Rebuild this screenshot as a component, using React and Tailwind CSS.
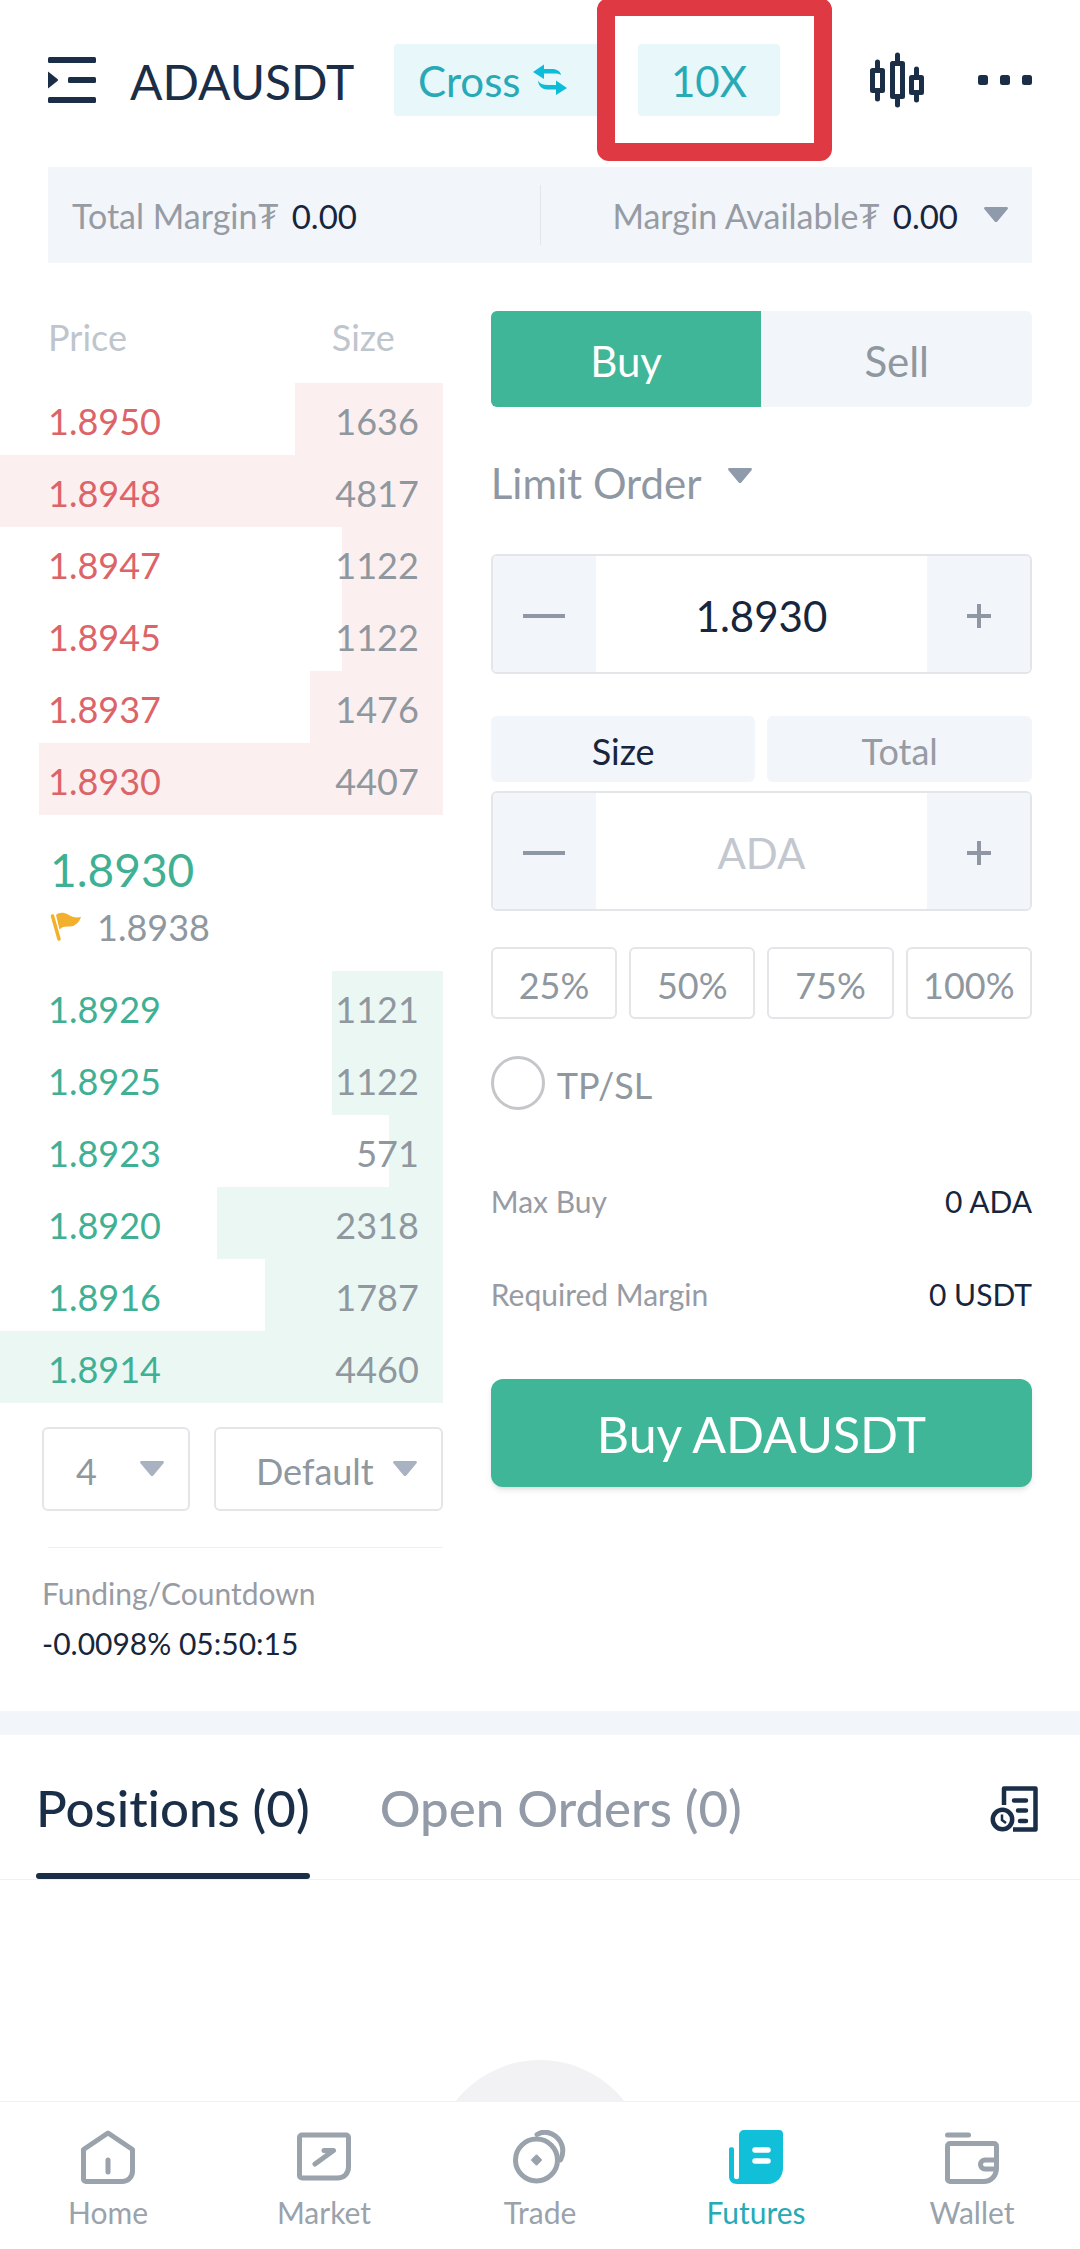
import { useState } from 'react';

const asks = [
  { price: '1.8950', size: 1636, depth: 33.3 },
  { price: '1.8948', size: 4817, depth: 100 },
  { price: '1.8947', size: 1122, depth: 22.8 },
  { price: '1.8945', size: 1122, depth: 22.8 },
  { price: '1.8937', size: 1476, depth: 30 },
  { price: '1.8930', size: 4407, depth: 91.2 },
];

const bids = [
  { price: '1.8929', size: 1121, depth: 25 },
  { price: '1.8925', size: 1122, depth: 25 },
  { price: '1.8923', size: 571, depth: 12.2 },
  { price: '1.8920', size: 2318, depth: 51 },
  { price: '1.8916', size: 1787, depth: 40.2 },
  { price: '1.8914', size: 4460, depth: 100 },
];

const Caret = ({ className = '' }) => (
  <svg viewBox="0 0 24 16" className={`w-6 h-4 pointer-events-none ${className}`} fill="currentColor" aria-hidden="true">
    <path d="M1.5 0h21c1.3 0 1.9 1.4 1 2.3L13.3 14.5c-.7.8-1.9.8-2.6 0L.5 2.3C-.4 1.4.2 0 1.5 0z" />
  </svg>
);

const MenuIcon = () => (
  <svg viewBox="0 0 48 48" className="w-12 h-12" fill="currentColor" aria-hidden="true">
    <rect x="0" y="1" width="48" height="6" rx="1.5" />
    <rect x="20" y="21" width="28" height="6" rx="1.5" />
    <rect x="0" y="41" width="48" height="6" rx="1.5" />
    <path d="M0 15.5 9.500 23q1.2 1 0 2L0 32.500z" />
  </svg>
);

const SwapIcon = () => (
  <svg viewBox="0 0 34 32" className="w-[34px] h-8 text-[#0cbcd8]" aria-hidden="true">
    <g fill="currentColor">
      <path d="M0 8 11 .5V5h8c5 0 8.5 2.5 9 6-2-1.2-4-1.5-7-1.5H11V15z" />
      <path d="M34 24 23 16.500v4.500h-8c-5 0-8.500-1.500-10-4.500.5 5.500 4 9 9 9h9V31z" />
    </g>
  </svg>
);

const CandlesIcon = () => (
  <svg viewBox="0 0 54 56" className="w-[54px] h-14" fill="none" stroke="currentColor" aria-hidden="true">
    <g strokeWidth="5" strokeLinejoin="round">
      <rect x="2.5" y="18.5" width="10" height="20" />
      <rect x="22.5" y="11.5" width="10" height="33" />
      <rect x="41.500" y="25.500" width="10" height="15" />
    </g>
    <path d="M7.5 10v7M7.5 40v7M27.5 3v8M27.5 46v7M46.5 17v8M46.5 42v6" strokeWidth="5" strokeLinecap="round" />
  </svg>
);

const DotsIcon = () => (
  <svg viewBox="0 0 54 10" className="w-[54px] h-[10px]" fill="currentColor" aria-hidden="true">
    <rect width="10" height="10" rx="2.5" />
    <rect x="22" width="10" height="10" rx="2.5" />
    <rect x="44" width="10" height="10" rx="2.5" />
  </svg>
);

const FlagIcon = () => (
  <svg viewBox="0 0 31 30" className="w-[31px] h-[30px] text-[#f2b02c]" aria-hidden="true">
    <path d="M2.5 4 9 27" stroke="currentColor" strokeWidth="3.5" strokeLinecap="round" />
    <path d="M6 3C9 0 14 0 18 2.500s8 3.500 13 2.500c-2 6-6 9-11 9.500-4 .3-7-.5-10.500 3z" fill="currentColor" />
  </svg>
);

const HistoryIcon = () => (
  <svg viewBox="0 0 48 48" className="w-12 h-12" fill="none" stroke="currentColor" aria-hidden="true">
    <path d="M14 20V3.5h31.5v41H23" strokeWidth="4.5" strokeLinejoin="round" />
    <path d="M24 15.5h12M28 25.500h8M30 36h6" strokeWidth="4.5" strokeLinecap="round" />
    <circle cx="12.5" cy="34.5" r="9.7" strokeWidth="4.5" />
    <path d="M12 29.500v5.500l4 3" strokeWidth="2.5" />
  </svg>
);

const HomeIcon = () => (
  <g>
    <path d="M2.5 19.5 27 3l24.5 16.5V41c0 6-4.5 10.5-10.5 10.5H5a2.5 2.5 0 0 1-2.5-2.5z" />
    <path d="M27 30v12" />
  </g>
);

const MarketIcon = () => (
  <g>
    <path d="M5 5h44a2.5 2.5 0 0 1 2.5 2.5V37c0 6.5-4.5 11-11 11H5a2.5 2.5 0 0 1-2.5-2.5v-38A2.5 2.5 0 0 1 5 5z" />
    <path d="M18 34 36.5 20.500H27" />
  </g>
);

const TradeIcon = () => (
  <g>
    <circle cx="23.5" cy="30" r="21" />
    <path d="M24 4.500c4-2.500 10-3 15-.5 10 5 13.500 16 8.500 26" />
    <path d="m23.500 25.500 4.500 4.500-4.500 4.500L19 30z" fill="currentColor" strokeWidth="2" />
  </g>
);

const FuturesIcon = () => (
  <g stroke="none" fill="currentColor">
    <path d="M15 0h35a4 4 0 0 1 4 4v34c0 9-6.500 16-15 16H8c-5 0-8-3-8-8V19c0-2.500 5-2.500 5 0v28c0 3 5 3 5 0V5a5 5 0 0 1 5-5z" />
    <path d="M26 20h13M26 31h13" stroke="#fff" strokeWidth="5.5" fill="none" />
  </g>
);

const WalletIcon = () => (
  <g>
    <path d="M2.5 5h21" />
    <path d="M5 13.500h44a2.500 2.500 0 0 1 2.500 2.500v22c0 8-5.500 13.500-13 13.500H5A2.500 2.500 0 0 1 2.500 49V16A2.500 2.500 0 0 1 5 13.500z" />
    <path d="M51 30H40a4.500 4.500 0 0 0 0 9h10" />
  </g>
);

const navItems = [
  { label: 'Home', Icon: HomeIcon },
  { label: 'Market', Icon: MarketIcon },
  { label: 'Trade', Icon: TradeIcon },
  { label: 'Futures', Icon: FuturesIcon, active: true },
  { label: 'Wallet', Icon: WalletIcon },
];

const BookRows = ({ rows, priceClass, barColor }) => (
  <tbody>
    {rows.map(row => (
      <tr
        key={row.price}
        className="h-[72px]"
        style={{ background: `linear-gradient(to left, ${barColor} ${row.depth}%, transparent ${row.depth}%)` }}
      >
        <td className={`pl-12 pt-[3px] ${priceClass}`}>{row.price}</td>
        <td className="pr-6 pt-[3px] text-right text-[#8f979f]">{row.size}</td>
      </tr>
    ))}
  </tbody>
);

const Stepper = ({ label, value, onChange, placeholder }) => (
  <div className="flex h-[120px] border-2 border-[#e3e5e8] rounded-md overflow-hidden text-[#8f97a5]">
    <button aria-label={`Decrease ${label}`} className="w-[103px] shrink-0 pt-1 bg-[#f2f5f9] flex items-center justify-center">
      <svg viewBox="0 0 42 4" className="w-[42px] h-1" fill="currentColor"><rect width="42" height="4" /></svg>
    </button>
    <input
      aria-label={label}
      value={value}
      placeholder={placeholder}
      onChange={e => onChange(e.target.value)}
      className="flex-1 min-w-0 pt-1 text-center text-[42px] text-[#17263c] placeholder:text-[#c3c7d0] outline-none"
    />
    <button aria-label={`Increase ${label}`} className="w-[103px] shrink-0 pt-1 bg-[#f2f5f9] flex items-center justify-center">
      <svg viewBox="0 0 24 24" className="w-6 h-6" stroke="currentColor" strokeWidth="4"><path d="M12 0v24M0 12h24" /></svg>
    </button>
  </div>
);

const Futures = () => {
  const [price, setPrice] = useState('1.8930');
  const [size, setSize] = useState('');
  const [tpsl, setTpsl] = useState(false);

  const renderHeader = () => (
    <header className="flex items-center h-40 px-12 mb-[7px] text-[#1a2f47]">
      <button aria-label="Open pairs"><MenuIcon /></button>
      <h1 className="ml-[34px] pt-1 text-[48px]">ADAUSDT</h1>
      <div className="flex items-center ml-auto">
        <button className="flex items-center gap-3 w-[206px] h-[72px] pl-6 rounded-sm bg-[#e8f7fa] text-[42px] text-[#27aab6]">
          <span className="pt-[3px]">Cross</span>
          <SwapIcon />
        </button>
        <div className="relative ml-[38px]">
          <button className="w-[142px] h-[72px] pt-[3px] rounded-sm bg-[#e8f7fa] text-[42px] text-[#27aab6]">10X</button>
          <div className="absolute -left-[41px] -right-[52px] -top-[46px] -bottom-[45px] border-[18px] border-[#df3a44] rounded-xl pointer-events-none" />
        </div>
        <button aria-label="Chart" className="ml-[90px]"><CandlesIcon /></button>
        <button aria-label="More" className="ml-[54px]"><DotsIcon /></button>
      </div>
    </header>
  );

  const renderMargin = () => (
    <section className="flex items-center mx-12 h-24 bg-[#f2f5f9] text-[34px] text-[#979ba4]">
      <div className="flex-1 pl-6 pt-[2px]">
        Total Margin₮ <span className="ml-1 text-[33px] text-[#17263c]">0.00</span>
      </div>
      <div className="w-px h-[60px] bg-[#e3e6eb]" />
      <div className="flex-1 flex items-center justify-end pr-6">
        <span className="pt-[2px]">
          Margin Available₮ <span className="ml-1 text-[33px] text-[#17263c]">0.00</span>
        </span>
        <button aria-label="Expand margin" className="ml-[26px] text-[#8f9bab]"><Caret /></button>
      </div>
    </section>
  );

  const renderOrderBook = () => (
    <section className="w-[41%] shrink-0 pt-[38px]">
      <table className="w-full text-[36px] leading-10">
        <thead>
          <tr className="h-[82px] align-top text-[#bfc5cd]">
            <th className="pl-12 pt-4 text-left font-normal">Price</th>
            <th className="pr-12 pt-4 text-right font-normal">Size</th>
          </tr>
        </thead>
        <BookRows rows={asks} priceClass="text-[#dc6468]" barColor="#fcefef" />
        <tbody>
          <tr className="h-[156px]">
            <td colSpan={2} className="pl-[50px] pt-2">
              <p className="text-[46px] leading-[60px] text-[#40b094]">1.8930</p>
              <p className="flex items-center gap-4 h-[54px] text-[#8f979f]">
                <FlagIcon />
                <span>1.8938</span>
              </p>
            </td>
          </tr>
        </tbody>
        <BookRows rows={bids} priceClass="text-[#40b094]" barColor="#ebf7f3" />
      </table>

      <div className="flex gap-6 mt-6 ml-[42px] text-[36px] text-[#8f979f]">
        <div className="relative flex-[148]">
          <select aria-label="Price decimals" className="appearance-none w-full h-[84px] pt-1 pl-8 border-2 border-[#e3e5e8] rounded-md">
            <option>4</option>
          </select>
          <Caret className="absolute right-[26px] top-[34px] text-[#a9b2c0]" />
        </div>
        <div className="relative flex-[229]">
          <select aria-label="Book view" className="appearance-none w-full h-[84px] pt-1 pl-10 border-2 border-[#e3e5e8] rounded-md">
            <option>Default</option>
          </select>
          <Caret className="absolute right-[26px] top-[34px] text-[#a9b2c0]" />
        </div>
      </div>

      <div className="mt-9 ml-12 h-px bg-[#eef0f3]" />
      <div className="mt-5 pb-[43px] pl-[42px] text-[30px] leading-[50px]">
        <p className="text-[#979ba4]">Funding/Countdown</p>
        <p className="text-[#17263c]">-0.0098% 05:50:15</p>
      </div>
    </section>
  );

  const renderOrderForm = () => (
    <section className="flex-1 min-w-0 px-12 pt-12">
      <div className="flex h-24 rounded-md overflow-hidden text-[42px]">
        <button className="flex-1 pt-1 bg-[#3fb698] text-white">Buy</button>
        <button className="flex-1 pt-1 bg-[#f2f5f9] text-[#8f979f]">Sell</button>
      </div>

      <div className="relative flex w-fit mt-[45px] text-[42px] text-[#8f97a3]">
        <select aria-label="Order type" className="appearance-none h-14 pr-[50px]">
          <option>Limit Order</option>
        </select>
        <Caret className="absolute right-0 top-4 text-[#8f9bab]" />
      </div>

      <div className="mt-[46px]">
        <Stepper label="Price" value={price} onChange={setPrice} />
      </div>

      <div className="flex gap-3 mt-[42px] mb-[9px] h-[66px] text-[36px]">
        <button className="flex-1 pt-1 rounded-md bg-[#f2f5f9] text-[#17263c]">Size</button>
        <button className="flex-1 pt-1 rounded-md bg-[#f2f5f9] text-[#979ba4]">Total</button>
      </div>
      <Stepper label="Size" value={size} onChange={setSize} placeholder="ADA" />

      <div className="grid grid-cols-4 gap-3 mt-9 text-[36px] text-[#8f979f]">
        {['25%', '50%', '75%', '100%'].map(pct => (
          <button key={pct} className="h-[72px] pt-1 border-2 border-[#e3e5e8] rounded-md">{pct}</button>
        ))}
      </div>

      <label className="flex items-center gap-3 h-14 mt-9 text-[36px] text-[#8f979f]">
        <input
          type="checkbox"
          checked={tpsl}
          onChange={e => setTpsl(e.target.checked)}
          className="appearance-none w-[54px] h-[54px] border-[3px] border-[#c4c6c9] rounded-full checked:bg-[#3fb698]"
        />
        <span className="pt-1">TP/SL</span>
      </label>

      <dl className="mt-[44px] text-[30px]">
        <div className="flex items-center justify-between h-[93px]">
          <dt className="text-[#979ba4]">Max Buy</dt>
          <dd className="text-[#17263c]">0 ADA</dd>
        </div>
        <div className="flex items-center justify-between h-[93px]">
          <dt className="text-[#979ba4]">Required Margin</dt>
          <dd className="text-[#17263c]">0 USDT</dd>
        </div>
      </dl>

      <button className="w-full h-[108px] mt-[38px] pt-[2px] rounded-xl bg-[#3fb698] shadow-md text-[50px] text-white">
        Buy ADAUSDT
      </button>
    </section>
  );

  const renderPositions = () => (
    <section>
      <div className="flex items-center h-[145px] pl-9 pr-[42px] border-b border-[#eef0f3] text-[51px] [font-variant-ligatures:none]">
        <button className="relative h-full pt-[2px] font-medium text-[#1a2f47]">
          Positions (0)
          <span className="absolute left-0 right-0 bottom-0 h-[6px] rounded-sm bg-[#1a2f47]" />
        </button>
        <button className="h-full pt-[2px] ml-[70px] font-medium text-[#929ba7]">Open Orders (0)</button>
        <button aria-label="Order history" className="ml-auto pt-1 text-[#1a2f47]"><HistoryIcon /></button>
      </div>
      {/* Empty state */}
      <div className="pt-[180px] pb-20">
        <div className="w-[214px] h-[214px] mx-auto rounded-full bg-[#f2f2f5]" />
      </div>
    </section>
  );

  return (
    <div className="h-screen flex flex-col bg-white font-['Lato','Noto_Sans',sans-serif]">
      <main className="flex-1 min-h-0 overflow-y-auto [scrollbar-width:none]">
        {renderHeader()}
        {renderMargin()}
        <div className="flex">
          {renderOrderBook()}
          {renderOrderForm()}
        </div>
        <div className="h-6 bg-[#f2f5f9]" />
        {renderPositions()}
      </main>

      <nav className="grid grid-cols-5 h-[148px] shrink-0 pt-7 border-t border-[#f2f2f4] bg-white text-[30px]">
        {navItems.map(({ label, Icon, active }) => (
          <a key={label} href="#" className={`flex flex-col items-center gap-[6px] ${active ? 'text-[#12bfd8]' : 'text-[#9aa2ab]'}`}>
            <svg viewBox="0 0 54 54" className="w-[54px] h-[54px]" fill="none" stroke="currentColor" strokeWidth="5" strokeLinecap="round" strokeLinejoin="round" aria-hidden="true">
              <Icon />
            </svg>
            <span className={active ? 'text-[#27aab6]' : ''}>{label}</span>
          </a>
        ))}
      </nav>
    </div>
  );
};

export default Futures;
